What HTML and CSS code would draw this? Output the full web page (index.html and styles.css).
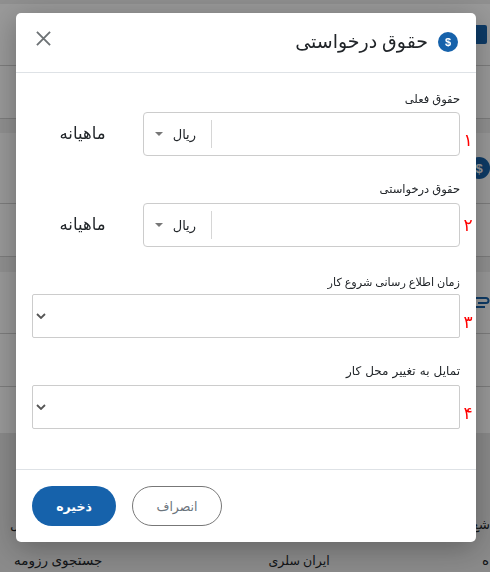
FILE: index.html
```html
<!DOCTYPE html>
<html lang="fa" dir="rtl">
<head>
<meta charset="utf-8">
<title>حقوق درخواستی</title>
<link rel="stylesheet" href="styles.css">
</head>
<body>
<div class="page">
  <div class="bg-top"></div>
  <div class="bg-row bg-r1"><span class="bg-badge"></span></div>
  <div class="bg-row bg-r2"></div>
  <div class="bg-band"></div>
  <div class="bg-row bg-r3"><span class="bg-dollar">$</span></div>
  <div class="bg-row bg-r2"></div>
  <div class="bg-band bg-band-wide"></div>
  <div class="bg-row bg-r1">
    <svg class="bg-clip" viewBox="0 0 14 14" width="14" height="14"><path d="M0 2h10a2.500 2.500 0 0 1 0 5H2M0 11h9" fill="none" stroke="#1662ab" stroke-width="2"/></svg>
  </div>
  <div class="bg-row bg-r2"></div>
  <div class="bg-r7"></div>
  <div class="bg-foot">
    <div class="bg-foot-a"><span>شغ</span><span>ل</span></div>
    <div class="bg-foot-b"><span>ه</span><span class="bg-mid">ایران سلری</span><span>جستجوی رزومه</span></div>
  </div>
</div>
<div class="overlay"></div>
<section class="modal">
  <header class="modal-head">
    <div class="title">
      <span class="title-icon">$</span>
      <h1>حقوق درخواستی</h1>
    </div>
    <svg class="close" viewBox="0 0 16 16" width="15" height="15"><path d="M1 1l14 14M15 1L1 15" fill="none" stroke="#6d7275" stroke-width="2"/></svg>
  </header>
  <div class="modal-body">
    <div class="field f1">
      <label>حقوق فعلی</label>
      <div class="row">
        <span class="num num-low">۱</span>
        <div class="money">
          <div class="money-input"></div>
          <div class="unit"><span class="sep"></span><span class="rial">ریال</span><span class="caret"></span></div>
        </div>
        <span class="period">ماهیانه</span>
      </div>
    </div>
    <div class="field f2">
      <label>حقوق درخواستی</label>
      <div class="row">
        <span class="num">۲</span>
        <div class="money">
          <div class="money-input"></div>
          <div class="unit"><span class="sep"></span><span class="rial">ریال</span><span class="caret"></span></div>
        </div>
        <span class="period">ماهیانه</span>
      </div>
    </div>
    <div class="field f3">
      <label>زمان اطلاع رسانی شروع کار</label>
      <div class="row">
        <span class="num num-low">۳</span>
        <div class="select"><svg viewBox="0 0 10 6" width="10" height="6"><path d="M1 1l4 4 4-4" fill="none" stroke="#555" stroke-width="1.800"/></svg></div>
      </div>
    </div>
    <div class="field f4">
      <label>تمایل به تغییر محل کار</label>
      <div class="row">
        <span class="num num-low">۴</span>
        <div class="select"><svg viewBox="0 0 10 6" width="10" height="6"><path d="M1 1l4 4 4-4" fill="none" stroke="#555" stroke-width="1.800"/></svg></div>
      </div>
    </div>
  </div>
  <footer class="modal-foot">
    <button class="btn cancel">انصراف</button>
    <button class="btn save">ذخیره</button>
  </footer>
</section>
</body>
</html>
```
FILE: styles.css
```css
* { box-sizing: border-box; }
html, body { margin: 0; padding: 0; height: 572px; overflow: hidden; }
body { font-family: "Noto Sans", "DejaVu Sans", sans-serif; background: #fff; color: #212529; }

.page { width: 490px; height: 572px; display: flex; flex-direction: column; }
.bg-top { height: 4px; background: #eee; flex: none; }
.bg-row { border-bottom: 1px solid #d0d0d0; display: flex; align-items: center; flex: none; }
.bg-r1 { height: 62px; }
.bg-r2 { height: 53px; }
.bg-r3 { height: 71px; }
.bg-r7 { height: 46px; flex: none; }
.bg-band { height: 14px; background: #f0f0f0; flex: none; }
.bg-band-wide { height: 15px; }
.bg-foot { flex: 1; background: #e6e6e6; display: flex; flex-direction: column; justify-content: flex-end; font-size: 13.500px; color: #212529; }
.bg-foot-a { display: flex; justify-content: space-between; padding: 0 0 0 10px; height: 20px; line-height: 20px; margin-bottom: 14px; }
.bg-foot-b { display: flex; justify-content: space-between; padding: 0 1px 0 14px; height: 24px; align-items: center; }
.bg-mid { font-size: 12.500px; margin-left: 14px; }
.bg-badge { width: 11px; height: 19px; background: #1662ab; margin-right: 3px; border-radius: 0 2px 2px 0; }
.bg-dollar { width: 22px; height: 22px; border-radius: 50%; background: #1662ab; color: #fff; font: 700 13px "Liberation Sans", sans-serif; display: flex; align-items: center; justify-content: center; }
.bg-clip { margin-right: 0; }

.overlay { position: fixed; inset: 0; background: rgba(0,0,0,.4); }

.modal { position: fixed; left: 16px; top: 13px; width: 460px; height: 529px; background: #fff; border-radius: 5px; display: flex; flex-direction: column; box-shadow: 0 6px 30px rgba(0,0,0,.3); }
.modal-head { height: 60px; border-bottom: 1px solid #dee2e6; display: flex; align-items: center; justify-content: space-between; padding: 0 18px 9px 20px; flex: none; }
.title { display: flex; align-items: center; gap: 10px; margin-top: 6px; }
.title-icon { width: 20px; height: 20px; border-radius: 50%; background: #1662ab; color: #fff; font: 700 11px "Liberation Sans", sans-serif; display: flex; align-items: center; justify-content: center; margin-top: 2px; }
h1 { margin: 0; font-size: 19px; font-weight: 400; color: #212529; line-height: 30px; }
.close { margin-top: 1px; }

.modal-body { flex: 1; }
.field { display: flex; flex-direction: column; }
.field label { font-size: 11.500px; line-height: 18px; color: #212529; padding-right: 16px; }
.f1 { padding-top: 17px; }
.f2 { padding-top: 24px; }
.f3 { padding-top: 26px; }
.f4 { padding-top: 24px; }
.f3 label { font-size: 11.200px; }
.f4 label { font-size: 12px; word-spacing: 1px; }
.row { display: flex; align-items: center; margin-top: 4px; height: 44px; }
.f2 .row { margin-top: 5px; }
.f3 .row { margin-top: 3px; }
.f4 .row { margin-top: 5px; }
.num { width: 16px; height: 44px; color: #f00; font-size: 17px; text-align: center; flex: none; line-height: 44px; }
.num-low { padding-top: 6px; }
.money { width: 317px; height: 44px; border: 1px solid #ccc; border-radius: 4px; display: flex; flex: none; }
.money-input { flex: 1; }
.unit { width: 68px; display: flex; align-items: center; flex: none; }
.sep { width: 1px; height: 28px; background: #d6d6d6; flex: none; }
.rial { font-size: 13px; margin-right: 15px; color: #212529; }
.caret { width: 0; height: 0; border: 4px solid transparent; border-top: 4px solid #777; border-bottom: 0; margin-right: 10px; }
.period { font-size: 16.500px; flex: 1; text-align: center; padding-left: 6px; padding-bottom: 3px; color: #212529; }
.select { width: 428px; height: 44px; border: 1px solid #ccc; border-radius: 2px; display: flex; align-items: center; justify-content: flex-end; padding-left: 3px; flex: none; }

.modal-foot { height: 73px; border-top: 1px solid #dee2e6; display: flex; align-items: center; justify-content: flex-end; gap: 16px; padding-left: 16px; flex: none; }
.btn { height: 40px; border-radius: 20px; font-family: inherit; font-size: 12.500px; padding: 0; }
.cancel { width: 90px; background: #fff; border: 1px solid #777; color: #6c757d; }
.save { width: 84px; background: #1662ab; border: 0; color: #fff; font-weight: 700; }
```
